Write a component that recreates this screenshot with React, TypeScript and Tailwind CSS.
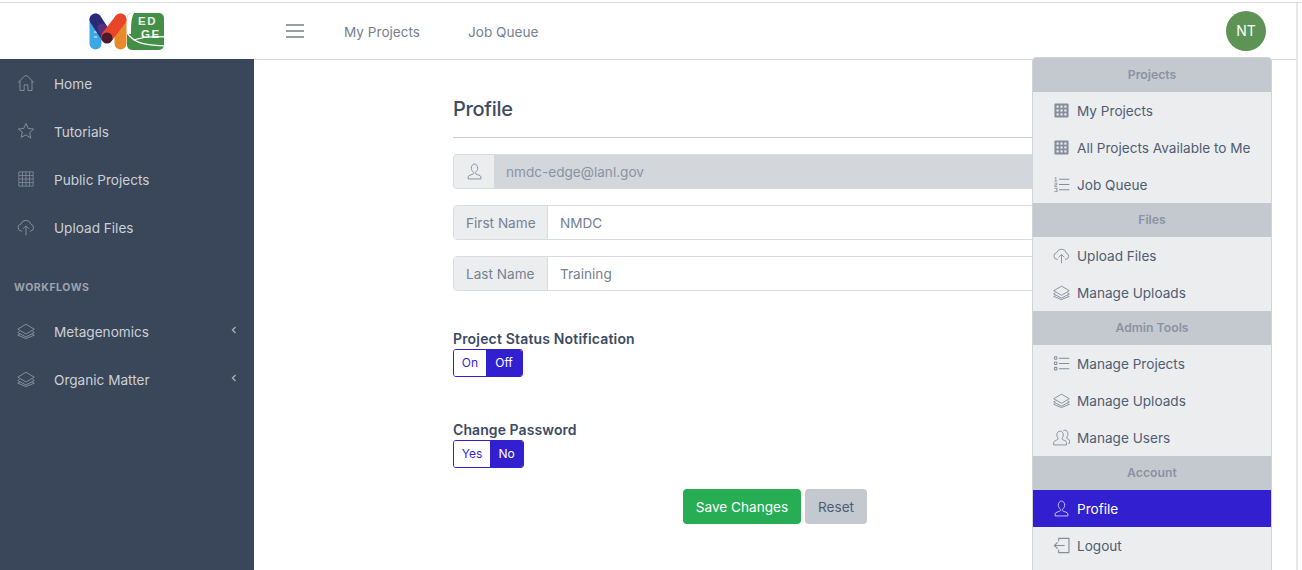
import React from "react";

type IconProps = { className?: string };
const Svg = ({ className, children, sw = 1.3 }: IconProps & { children: React.ReactNode; sw?: number }) => (
  <svg viewBox="0 0 24 24" fill="none" stroke="currentColor" strokeWidth={sw} strokeLinejoin="round" className={className}>
    {children}
  </svg>
);

const Home = (p: IconProps) => (
  <Svg {...p}>
    <path d="M1.500 11.500 9.500 3.200c1.400-1.400 3.600-1.400 5 0l8 8.300" />
    <path d="M4 9v13h5.500v-7.500h5V22H20V9" />
  </Svg>
);
const Star = (p: IconProps) => (
  <Svg {...p}>
    <path d="m12 2 3 6.600 7.200.8-5.300 4.900 1.500 7.200L12 17l-6.400 3.500 1.500-7.200L1.800 9.400 9 8.600z" />
  </Svg>
);
const Grid = (p: IconProps) => (
  <Svg {...p} sw={1.1}>
    <path d="M2.500 2.500h19v19h-19zM2.500 7.250h19M2.500 12h19M2.500 16.750h19M7.250 2.500v19M12 2.500v19M16.750 2.500v19" />
  </Svg>
);
const GridSolid = (p: IconProps) => (
  <svg viewBox="0 0 24 24" className={p.className}>
    <rect x="2" y="2" width="20" height="20" rx="1.500" fill="currentColor" />
    {[5, 10.500, 16].map((y) =>
      [5, 10.500, 16].map((x) => <rect key={`${x}-${y}`} x={x} y={y} width="3" height="3" fill="#ebedef" />)
    )}
  </svg>
);
const Cloud = (p: IconProps) => (
  <Svg {...p}>
    <path d="M7 17.500H6a4.800 4.800 0 0 1-.8-9.500A7 7 0 0 1 18.700 8.500a4.600 4.600 0 0 1-.7 9H17" />
    <path d="M12 23V11M8 14.500l4-4 4 4" />
  </Svg>
);
const Layers = (p: IconProps) => (
  <Svg {...p}>
    <path d="M12 3 23 9.500l-11 6.500L1 9.500z" />
    <path d="m3.500 12.500-2.500 1.500 11 6 11-6-2.500-1.500" />
    <path d="m3.500 16.500-2.500 1 11 4.500 11-4.500-2.500-1" />
  </Svg>
);
const ListNum = (p: IconProps) => (
  <Svg {...p} sw={1.5}>
    <path d="M8.500 4.500H23M8.500 12H23M8.500 19.500H23" />
    <path d="M2.500 2.500 4 2v5M2 7h4M2 10h3.500v2.500H2.500V15H6M2 17.500h4l-1.500 2.500H6V22H2" strokeWidth="1.100" />
  </Svg>
);
const ListRich = (p: IconProps) => (
  <Svg {...p} sw={1.5}>
    <path d="M8.500 4.500H23M8.500 12H23M8.500 19.500H23" />
    <rect x="2" y="2.500" width="3.500" height="3.500" rx="1" />
    <rect x="2" y="10" width="3.500" height="3.500" rx="1" />
    <rect x="2" y="17.500" width="3.500" height="3.500" rx="1" />
  </Svg>
);
const Users = (p: IconProps) => (
  <Svg {...p} sw={1.3}>
    <path d="M1 22.500v-3.500c0-2 3.500-3 5.500-4 .8-.5.800-1.500.3-2.500-1-1.200-1.300-2.500-1.300-4 0-3.500 1.900-5.500 4.500-5.500s4.500 2 4.500 5.500c0 1.500-.3 2.800-1.300 4-.5 1-.5 2 .3 2.500 2 1 5.500 2 5.500 4v3.500z" />
    <path d="M14.500 2.500c.6-.5 1.300-.8 2-.8 2.600 0 4.500 2 4.500 5.500 0 1.500-.3 2.800-1.300 4-.5 1-.5 2 .3 2.500 1.200.6 3.500 1.300 3.500 3v3.500h-2" />
  </Svg>
);
const User = (p: IconProps) => (
  <Svg {...p} sw={1.4}>
    <path d="M3 22.500v-3c0-2 5-3 7-4 1-.5 1-1.500.5-2.500C9.200 11.700 7.500 10 7.500 7.500 7.500 4 9.500 1.500 12 1.500s4.500 2.500 4.500 6c0 2.500-1.700 4.200-3 5.500-.5 1-.5 2 .5 2.500 2 1 7 2 7 4v3z" />
  </Svg>
);
const Logout = (p: IconProps) => (
  <Svg {...p} sw={1.6}>
    <path d="M8 6V2h14.500v20H8v-4" />
    <path d="M16.500 12H2M6.500 7.500 2 12l4.500 4.500" />
  </Svg>
);
const Chevron = (p: IconProps) => (
  <svg viewBox="0 0 8 8" fill="none" stroke="currentColor" strokeWidth="1.400" className={p.className}>
    <path d="M5.500 1 2.500 4l3 3" />
  </svg>
);

const Logo = () => (
  <svg viewBox="0 0 76 37" className="w-[76px] h-[37px]">
    <defs>
      <clipPath id="leaf"><rect x="38" y="0" width="37" height="37" rx="5" /></clipPath>
    </defs>
    <path d="M6.500 6.500v24" stroke="#3aa8e4" strokeWidth="12" strokeLinecap="round" />
    <path d="M6.500 13v15" stroke="#8fd0f2" strokeWidth="3" strokeDasharray="2 3" />
    <path d="M6.500 6.500 18 24" stroke="#2b2a78" strokeWidth="12" strokeLinecap="round" />
    <path d="M13 15 18 24" stroke="#5a2f7f" strokeWidth="9" strokeLinecap="round" />
    <path d="M31.500 6.500v24" stroke="#e98a2c" strokeWidth="12" strokeLinecap="round" />
    <path d="M31.500 6.500 18 24" stroke="#e8452b" strokeWidth="12" strokeLinecap="round" />
    <circle cx="18" cy="25" r="5.500" fill="#4b1a2c" />
    <g clipPath="url(#leaf)">
      <rect x="38" width="38" height="37" fill="#438f48" />
      <path d="M38 20c6 8 12 12 38 13M44 27c10-3 22-4 32-3" stroke="#fff" strokeWidth="1.300" fill="none" />
      <path d="M38 0h7c-3 6-3 12-3 21h-4z" fill="#fff" />
      <text x="49" y="11.500" fontFamily="Liberation Sans, sans-serif" fontSize="11.500" fontWeight="700" letterSpacing="1.500" fill="#e4f0e4">ED</text>
      <text x="52" y="24.500" fontFamily="Liberation Sans, sans-serif" fontSize="11.500" fontWeight="700" letterSpacing="1.500" fill="#fff">GE</text>
    </g>
  </svg>
);

const SideItem = ({ icon: I, label, chevron }: { icon: (p: IconProps) => React.ReactElement; label: string; chevron?: boolean }) => (
  <div className="h-12 flex items-center pl-[17px] pr-4 text-[#ccd0d6]">
    <I className="w-[18px] h-[18px] shrink-0 text-[#858e9c] -mt-[2px]" />
    <span className="ml-[19px] flex-1">{label}</span>
    {chevron && <Chevron className="w-2 h-2 text-[#a8aeb8] -mt-1" />}
  </div>
);

const MenuHead = ({ children }: { children: React.ReactNode }) => (
  <div className="h-[34px] flex items-center justify-center bg-[#c4c9d0] text-[#8a93a2] text-[12.250px] font-semibold">{children}</div>
);
const MenuItem = ({ icon: I, label, active }: { icon: (p: IconProps) => React.ReactElement; label: string; active?: boolean }) => (
  <div className={`h-[37px] flex items-center pl-[20px] ${active ? "bg-[#321fd0] text-white" : "text-[#4f5d73]"}`}>
    <I className={`w-[17px] h-[17px] shrink-0 ${active ? "text-[#c9c5f4]" : "text-[#858e9c]"}`} />
    <span className="ml-[7px] pt-[2px]">{label}</span>
  </div>
);

const Field = ({ label, value }: { label: string; value: string }) => (
  <div className="flex h-[35px] mb-4 rounded border border-[#d8dbe0] overflow-hidden">
    <div className="w-[94px] shrink-0 bg-[#ebedef] border-r border-[#d8dbe0] pl-3 pt-[2px] flex items-center text-[#768192]">{label}</div>
    <div className="flex-1 pl-3 pt-[2px] flex items-center text-[#768192]">{value}</div>
  </div>
);

const Toggle = ({ a, b, wa, wb }: { a: string; b: string; wa: string; wb: string }) => (
  <div className="flex h-7 w-fit rounded-[3px] border border-[#321fd0] text-xs overflow-hidden">
    <div className={`${wa} flex items-center justify-center text-[#321fd0] bg-white`}>{a}</div>
    <div className={`${wb} flex items-center justify-center text-white bg-[#321fd0]`}>{b}</div>
  </div>
);

export default function App() {
  return (
    <div className="relative h-[570px] w-full overflow-hidden bg-white pt-[2px] text-[13.600px] text-[#3c4b64]" style={{ fontFamily: "Inter, 'Liberation Sans', sans-serif" }}>
      <div className="h-[570px] border-t border-[#d8dbe0]">
        <div className="w-[1298px] h-full border-r-2 border-[#e6e7e9] flex flex-col">
          <header className="h-[57px] shrink-0 border-b border-[#d8dbe0] flex items-center">
            <div className="w-[254px] shrink-0 flex justify-center"><Logo /></div>
            <div className="ml-[32px] w-[18px] flex flex-col gap-[4px]">
              <span className="h-[2px] bg-[#9a9ea5]" />
              <span className="h-[2px] bg-[#9a9ea5]" />
              <span className="h-[2px] bg-[#9a9ea5]" />
            </div>
            <span className="ml-[40px] pt-[2px] text-[#768192]">My Projects</span>
            <span className="ml-[48px] pt-[2px] text-[#768192]">Job Queue</span>
            <div className="ml-auto mr-[30px] w-10 h-10 rounded-full bg-[#5d9455] text-white text-sm flex items-center justify-center">NT</div>
          </header>
          <div className="flex flex-1 min-h-0 -mt-px">
            <aside className="w-[254px] shrink-0 bg-[#3a4659] pt-px">
              <SideItem icon={Home} label="Home" />
              <SideItem icon={Star} label="Tutorials" />
              <SideItem icon={Grid} label="Public Projects" />
              <SideItem icon={Cloud} label="Upload Files" />
              <div className="h-[56px] pl-[14px] pt-[27px] text-[10.500px] font-bold tracking-[0.550px] text-[#9ca3ae] leading-[18px]">WORKFLOWS</div>
              <SideItem icon={Layers} label="Metagenomics" chevron />
              <SideItem icon={Layers} label="Organic Matter" chevron />
            </aside>
            <main className="flex-1 flex justify-center pt-[35px]">
              <div className="w-[644px]">
                <h4 className="text-[20px] font-medium leading-[30px] tracking-[-0.300px] text-[#3c4b64]">Profile</h4>
                <hr className="mt-[13px] mb-[16px] border-[#c8ccd2]" />
                <div className="flex h-[35px] mb-4 rounded border border-[#d8dbe0] overflow-hidden bg-[#d3d6da]">
                  <div className="w-[40px] shrink-0 bg-[#ebedef] flex items-center justify-center text-[#8a93a2]"><User className="w-[17px] h-[17px]" /></div>
                  <div className="flex-1 pl-3 pt-[2px] flex items-center text-[#8a93a2]">nmdc-edge@lanl.gov</div>
                </div>
                <Field label="First Name" value="NMDC" />
                <Field label="Last Name" value="Training" />
                <div className="mt-[37px] text-sm font-semibold tracking-[0.170px] leading-[21px]">Project Status Notification</div>
                <Toggle a="On" b="Off" wa="w-[32px]" wb="w-[36px]" />
                <div className="mt-[42px] text-sm font-semibold tracking-[0.080px] leading-[21px]">Change Password</div>
                <Toggle a="Yes" b="No" wa="w-[36px]" wb="w-[33px]" />
                <div className="mt-[21px] flex justify-center gap-1">
                  <div className="w-[118px] h-[35px] pt-[2px] rounded bg-[#27ae55] text-white flex items-center justify-center">Save Changes</div>
                  <div className="w-[62px] h-[35px] pt-[2px] rounded bg-[#c4c9d0] text-[#4f5d73] flex items-center justify-center">Reset</div>
                </div>
              </div>
            </main>
          </div>
        </div>
      </div>
      <div className="absolute left-[1032px] top-[57px] w-[240px] h-[530px] bg-[#ebedef] border border-[#d0d4da] rounded-t overflow-hidden">
        <MenuHead>Projects</MenuHead>
        <MenuItem icon={GridSolid} label="My Projects" />
        <MenuItem icon={GridSolid} label="All Projects Available to Me" />
        <MenuItem icon={ListNum} label="Job Queue" />
        <MenuHead>Files</MenuHead>
        <MenuItem icon={Cloud} label="Upload Files" />
        <MenuItem icon={Layers} label="Manage Uploads" />
        <MenuHead>Admin Tools</MenuHead>
        <MenuItem icon={ListRich} label="Manage Projects" />
        <MenuItem icon={Layers} label="Manage Uploads" />
        <MenuItem icon={Users} label="Manage Users" />
        <MenuHead>Account</MenuHead>
        <MenuItem icon={User} label="Profile" active />
        <MenuItem icon={Logout} label="Logout" />
      </div>
    </div>
  );
}
